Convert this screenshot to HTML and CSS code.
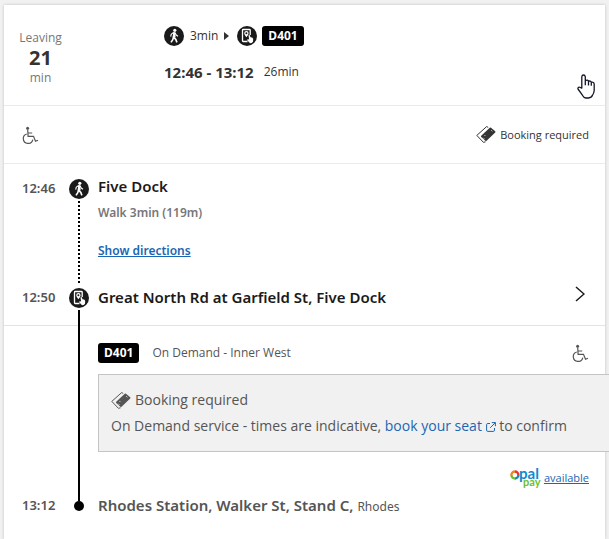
FILE: index.html
```
<!DOCTYPE html>
<html lang="en">
<head>
    <meta charset="UTF-8">
    <meta name="viewport" content="width=device-width, initial-scale=1.0">
    <title>Trip to Rhodes</title>
    <link rel="stylesheet" href="styles.css">
</head>
<body>
    <!-- icons shared by the rows below -->
    <svg class="defs" aria-hidden="true">
        <symbol id="walk" viewBox="0 0 20 20">
            <circle cx="10" cy="10" r="10" fill="#1a1a1a"/>
            <circle cx="10.8" cy="4.3" r="1.6" fill="#fff"/>
            <path d="M10.2 6.4L9.4 11.2L11.8 13.4L12.9 16.4M9.4 11.2L8.8 13.6L7 16.4" fill="none" stroke="#fff" stroke-width="1.6" stroke-linejoin="round"/>
            <path d="M9.1 6.2H11.3L11.6 11.6H8.9Z" fill="#fff"/>
            <path d="M9.3 6.6L7.2 8.2L6.7 10.6M11.1 6.8L12.2 9L14 10.2" fill="none" stroke="#fff" stroke-width="1.1"/>
        </symbol>
        <symbol id="demand" viewBox="0 0 20 20">
            <circle cx="10" cy="10" r="10" fill="#1a1a1a"/>
            <path d="M13.2 9V4.2Q13.2 3.5 12.5 3.5H6.2Q5.5 3.5 5.5 4.2V14.8Q5.5 15.5 6.2 15.5H10.5" fill="none" stroke="#fff" stroke-width="1.3"/>
            <path d="M9.4 11.2Q7.2 8.6 7.2 7.3A2.2 2.2 0 0 1 11.6 7.3Q11.6 8.6 9.4 11.2Z" fill="#fff"/>
            <circle cx="9.4" cy="7.3" r="1" fill="#1a1a1a"/>
            <path d="M11.5 9.2Q12.5 8.4 13 9.6L13.4 11.2Q16 11 16.2 13L16 15.8Q14.8 17.6 12.8 17L10.2 14.2Q10 13 11.2 13.2L12.1 13.6Z" fill="#fff"/>
        </symbol>
        <symbol id="wheelchair" viewBox="0 0 17 18">
            <circle cx="5.6" cy="2.3" r="1.5" fill="currentColor"/>
            <path d="M5.7 3.5L6.1 10.3H11.5L13.5 15.2L16 14.2M6 7H10.2M4.8 8A4.8 4.8 0 1 0 10.8 13.6" fill="none" stroke="currentColor" stroke-width="1.2"/>
        </symbol>
        <symbol id="ticket" viewBox="0 0 20 17">
            <path d="M12.2 1.4L10.6 .6L.8 9.4L7.4 16.3L9.6 15.8" fill="none" stroke="currentColor" stroke-width="1"/>
            <path d="M13.8 1.8Q14.4 1.2 15 1.7L19.2 5.3Q19.8 5.9 19.2 6.5L10.6 14.7Q10 15.3 9.4 14.7L5.2 11Q4.6 10.3 5.2 9.7Z" fill="currentColor"/>
            <path d="M7.4 11.8L8.2 12.6M15.4 4.4L16.3 5.2M8.6 9.2L9.3 9.9" stroke="#fff" stroke-width="1"/>
        </symbol>
    </svg>

    <main class="card">
        <header class="summary">
            <div class="leaving">
                <span>Leaving</span>
                <strong>21</strong>
                <span>min</span>
            </div>
            <div class="route">
                <div class="modes">
                    <svg class="mode"><use href="#walk"/></svg>
                    <span class="walk-time">3min</span>
                    <svg class="arrow" viewBox="0 0 5 8"><path d="M0 0L5 4L0 8Z" fill="#333"/></svg>
                    <svg class="mode"><use href="#demand"/></svg>
                    <span class="badge">D401</span>
                </div>
                <div class="times"><strong>12:46 - 13:12</strong> <span>26min</span></div>
            </div>
            <svg class="pointer" viewBox="0 0 18 25">
                <path d="M4.8 14.5V2.8Q5 1 6.5 1T8.3 2.8V6.6Q10.8 5.3 11.5 7.3Q13.5 6.4 14.3 8.3Q17 7.8 17.2 10.2V16.5Q17 19 15.6 21Q14.5 23.8 11.5 24H8.8Q6.8 23.8 5.4 21.2L1 15Q.6 13.6 2 13.2Q3.3 13 4.8 14.5M8.3 6.6V11.2M11.5 7.3V11.5M14.3 8.3V11.8" fill="#fff" stroke="#14142b" stroke-width="1.3" stroke-linejoin="round"/>
            </svg>
        </header>

        <div class="features">
            <svg class="wheelchair"><use href="#wheelchair"/></svg>
            <span class="booking"><svg class="ticket"><use href="#ticket"/></svg>Booking required</span>
        </div>

        <section class="leg leg-walk">
            <time>12:46</time>
            <div class="track">
                <svg class="mode"><use href="#walk"/></svg>
                <span class="line dotted"></span>
            </div>
            <div class="info">
                <h2>Five Dock</h2>
                <p class="walk">Walk 3min (119m)</p>
                <a class="directions" href="#">Show directions</a>
            </div>
        </section>

        <section class="leg leg-board">
            <time>12:50</time>
            <div class="track">
                <svg class="mode"><use href="#demand"/></svg>
                <span class="line"></span>
            </div>
            <div class="info">
                <h2>Great North Rd at Garfield St, Five Dock</h2>
            </div>
            <button type="button" class="expand" aria-label="Show stops">
                <svg viewBox="0 0 10 16"><path d="M1 1L9 8L1 15" fill="none" stroke="#1a1a1a" stroke-width="1.5"/></svg>
            </button>
        </section>

        <section class="leg leg-ride">
            <div class="track"><span class="line"></span></div>
            <div class="info">
                <div class="service">
                    <span class="badge">D401</span>
                    <span>On Demand - Inner West</span>
                    <svg class="wheelchair"><use href="#wheelchair"/></svg>
                </div>
                <div class="notice">
                    <p><svg class="ticket"><use href="#ticket"/></svg>Booking required</p>
                    <p>On Demand service - times are indicative,
                        <a href="#">book your seat
                            <svg class="external" viewBox="0 0 10 10"><path d="M4 1.5H1.8Q.6 1.5 .6 2.7V8.2Q.6 9.4 1.8 9.4H7.3Q8.5 9.4 8.5 8.2V6M5.8 .6H9.4V4.2M9.4 .6L4.2 5.8" fill="none" stroke="currentColor"/></svg></a>
                        to confirm</p>
                </div>
                <div class="payment">
                    <svg class="opal" viewBox="0 0 31 20" role="img" aria-label="Opal pay">
                        <g fill="none" stroke-width="2.4">
                            <path d="M1.4 7A3.5 3.5 0 0 1 4.9 3.5" stroke="#f58220"/>
                            <path d="M4.9 3.5A3.5 3.5 0 0 1 8.4 7" stroke="#e5352d"/>
                            <path d="M8.4 7A3.5 3.5 0 0 1 4.9 10.5" stroke="#0a8bd0"/>
                            <path d="M4.9 10.5A3.5 3.5 0 0 1 1.4 7" stroke="#6cbe2c"/>
                        </g>
                        <text class="opal-name" x="9" y="11">pal</text>
                        <text class="opal-pay" x="13" y="18">pay</text>
                    </svg>
                    <a href="#">available</a>
                </div>
            </div>
        </section>

        <section class="leg leg-end">
            <time>13:12</time>
            <div class="track"><span class="line"></span><span class="dot"></span></div>
            <div class="info">
                <h2>Rhodes Station, Walker St, Stand C, <small>Rhodes</small></h2>
            </div>
        </section>
    </main>
</body>
</html>
```
FILE: styles.css
```
* {
    box-sizing: border-box;
}
body {
    margin: 0;
    padding: 5px 4px 0;
    min-height: 100vh;
    display: flex;
    background: #f1f1f1;
    color: #333;
    font-family: "Open Sans", "Noto Sans", sans-serif;
    font-size: 12px;
    line-height: 20px;
    overflow: hidden;
}
h2, p {
    margin: 0;
}
h2, strong, time, .badge, .walk, .directions {
    font-family: "Noto Sans", sans-serif;
}
svg {
    display: block;
    flex: none;
}
a {
    color: #1b66b1;
}
.defs {
    position: absolute;
    width: 0;
    height: 0;
}
.card {
    flex: 1;
    min-width: 0;
    background: #fff;
    box-shadow: 0 0 3px rgba(0, 0, 0, 0.2);
}

/* trip summary */
.summary {
    position: relative;
    display: flex;
    gap: 103px;
    padding: 21px 16px 17px;
    border-bottom: 1px solid #ebebeb;
}
.leaving {
    display: flex;
    flex-direction: column;
    align-items: center;
    width: 41px;
    padding-top: 2px;
    color: #777;
}
.leaving strong {
    color: #333;
    font-size: 20px;
}
.modes {
    display: flex;
    align-items: center;
}
.mode {
    width: 20px;
    height: 20px;
}
.walk-time {
    margin: 0 6px;
}
.arrow {
    width: 5px;
    height: 8px;
    margin-right: 8px;
}
.badge {
    padding: 0 6px;
    border-radius: 3px;
    background: #000;
    color: #fff;
    font-weight: bold;
}
.modes .badge {
    margin-left: 5px;
}
.times {
    display: flex;
    align-items: center;
    gap: 10px;
    margin-top: 16px;
}
.times strong {
    font-size: 15px;
}
.pointer {
    position: absolute;
    right: 10px;
    bottom: 6px;
    width: 18px;
    height: 25px;
}

.features {
    display: flex;
    align-items: center;
    justify-content: space-between;
    height: 58px;
    padding: 0 16px 0 18px;
    border-bottom: 1px solid #ebebeb;
}
.wheelchair {
    width: 17px;
    height: 18px;
    color: #555;
}
.booking {
    display: flex;
    align-items: center;
    gap: 4px;
    font-size: 11px;
}
.ticket {
    width: 20px;
    height: 17px;
}

/* legs of the trip */
.leg {
    display: flex;
    padding: 0 16px 0 18px;
    color: #555;
}
.leg time {
    width: 47px;
    font-size: 13px;
    font-weight: 600;
    line-height: 18px;
}
.leg h2 {
    color: #1a1a1a;
    font-size: 15px;
    font-weight: 600;
    line-height: 18px;
}
.track {
    display: flex;
    flex-direction: column;
    align-items: center;
    width: 20px;
    margin-right: 9px;
}
.line {
    flex: 1;
    width: 2px;
    background: #000;
}
.dotted {
    margin: 2px 0 5px;
    background: repeating-linear-gradient(#000 0 2px, transparent 2px 4px);
}
.info {
    flex: 1;
    min-width: 0;
}
.leg-walk {
    height: 124px;
    padding-top: 15px;
}
.leg-walk h2 {
    margin-top: -2px;
}
.walk {
    margin: 8px 0 18px;
    color: #777;
    font-weight: 600;
}
.directions {
    font-weight: 600;
}
.leg-board {
    height: 38px;
    border-bottom: 1px solid #e3e3e3;
}
.leg-board .line {
    margin: 2px 0 -1px;
}
.expand {
    align-self: flex-start;
    margin-top: -2px;
    padding: 0 4px;
    border: 0;
    background: none;
}
.expand svg {
    width: 10px;
    height: 16px;
}
.leg-ride {
    padding-left: 65px;
}
.leg-ride .info {
    padding: 17px 0 7px;
}
.service {
    display: flex;
    align-items: center;
    gap: 13px;
}
.service .wheelchair {
    margin-left: auto;
}
.notice {
    margin: 11px -30px 16px 0;
    padding: 12px;
    border: 1px solid #c4c4c4;
    background: #f1f1f1;
    font-size: 14px;
    line-height: 26px;
}
.notice p {
    white-space: nowrap;
}
.notice .ticket {
    display: inline-block;
    margin-right: 4px;
    vertical-align: -4px;
}
.notice a {
    text-decoration: none;
}
.external {
    display: inline-block;
    width: 10px;
    height: 10px;
    vertical-align: -1px;
}
.payment {
    display: flex;
    align-items: center;
    justify-content: flex-end;
    gap: 3px;
    font-size: 11px;
}
.opal {
    width: 31px;
    height: 20px;
    overflow: visible;
}
.opal-name {
    fill: #0a8bd0;
    font: bold 15px Lato, sans-serif;
}
.opal-pay {
    fill: #6cbe2c;
    font: bold 11px Lato, sans-serif;
}
.leg-end time,
.leg-end h2 {
    padding-top: 1px;
}
.leg-end .line {
    flex: none;
    height: 6px;
}
.leg-end h2 {
    color: #555;
}
.leg-end small {
    font-size: 12px;
    font-weight: normal;
}
.dot {
    width: 10px;
    height: 10px;
    border-radius: 50%;
    background: #000;
}
```
